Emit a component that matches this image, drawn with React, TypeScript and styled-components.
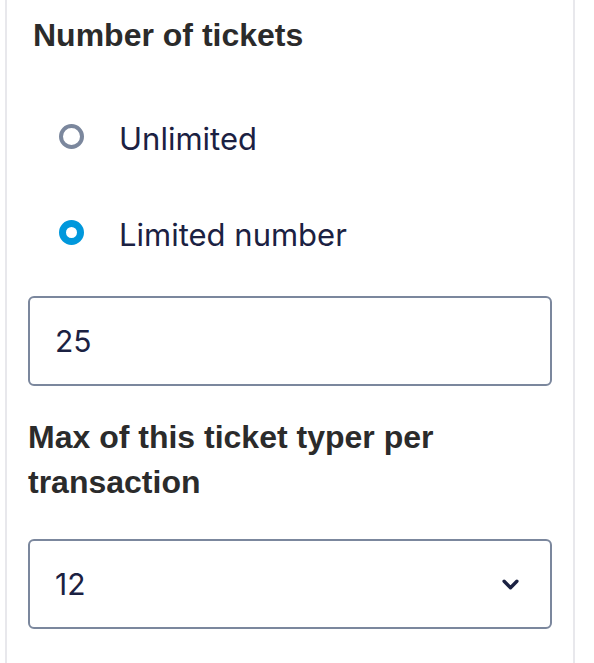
import React, { useState } from 'react'
import styled, { createGlobalStyle } from 'styled-components'

const colors = {
  heading: '#2b2b2b',
  text: '#1b2142',
  border: '#7b879d',
  panelLine: '#e8e8ec',
  blue: '#0098dc',
}

const GlobalStyle = createGlobalStyle`
  html, body {
    margin: 0;
    padding: 0;
    background: #fff;
  }
  * {
    box-sizing: border-box;
  }
`

type Choice = 'unlimited' | 'limited'

function App() {
  const [choice, setChoice] = useState<Choice>('limited')
  const [count, setCount] = useState('25')
  const [max, setMax] = useState('12')

  return (
    <>
      <GlobalStyle />
      <Panel>
        <Heading $indent={5}>Number of tickets</Heading>
        <RadioGroup>
          <RadioRow onClick={() => setChoice('unlimited')}>
            <RadioDot $checked={choice === 'unlimited'} />
            <RadioLabel>Unlimited</RadioLabel>
          </RadioRow>
          <RadioRow onClick={() => setChoice('limited')}>
            <RadioDot $checked={choice === 'limited'} />
            <RadioLabel>Limited number</RadioLabel>
          </RadioRow>
        </RadioGroup>
        <TextInput value={count} onChange={(e) => setCount(e.target.value)} />
        <Heading $indent={0} $top={29}>
          Max of this ticket typer per transaction
        </Heading>
        <SelectWrap>
          <Select value={max} onChange={(e) => setMax(e.target.value)}>
            {Array.from({ length: 20 }, (_, i) => (
              <option key={i + 1} value={String(i + 1)}>
                {i + 1}
              </option>
            ))}
          </Select>
          <Chevron viewBox="0 0 16 10" aria-hidden>
            <path
              d="M2 2l6 6 6-6"
              fill="none"
              stroke={colors.text}
              strokeWidth="3.2"
              strokeLinecap="round"
              strokeLinejoin="round"
            />
          </Chevron>
        </SelectWrap>
      </Panel>
    </>
  )
}

const Panel = styled.div`
  margin-left: 5px;
  width: 570px;
  min-height: 100vh;
  border-left: 2px solid ${colors.panelLine};
  border-right: 2px solid ${colors.panelLine};
  padding: 13px 21px 30px;
  display: flex;
  flex-direction: column;
`

const Heading = styled.h2<{ $indent: number; $top?: number }>`
  margin: ${(p) => p.$top ?? 0}px 0 0;
  padding-left: ${(p) => p.$indent}px;
  font-family: 'Liberation Sans', Arial, sans-serif;
  font-size: 32px;
  font-weight: 700;
  line-height: 1.42857;
  color: ${colors.heading};
  max-width: 430px;
`

const RadioGroup = styled.div`
  display: flex;
  flex-direction: column;
  gap: 48px;
  margin-top: 54px;
  margin-bottom: 39px;
`

const RadioRow = styled.label`
  display: flex;
  align-items: center;
  height: 48px;
  padding-left: 31px;
  gap: 35px;
  cursor: pointer;
`

const RadioDot = styled.span<{ $checked: boolean }>`
  flex: none;
  width: 25px;
  height: 25px;
  border-radius: 50%;
  background: #fff;
  border: ${(p) =>
    p.$checked ? `7.5px solid ${colors.blue}` : `4px solid ${colors.border}`};
`

const RadioLabel = styled.span`
  font-family: Inter, 'Noto Sans', sans-serif;
  font-size: 31px;
  color: ${colors.text};
  line-height: 1;
  padding-top: 4px;
`

const fieldStyles = `
  width: 100%;
  height: 90px;
  border: 2px solid ${colors.border};
  border-radius: 6px;
  background: #fff;
  padding: 0 25px;
  font-family: Inter, 'Noto Sans', sans-serif;
  font-size: 30px;
  color: ${colors.text};
  outline: none;
`

const TextInput = styled.input`
  ${fieldStyles}
`

const SelectWrap = styled.div`
  position: relative;
  margin-top: 33px;
`

const Select = styled.select`
  ${fieldStyles}
  appearance: none;
  -webkit-appearance: none;
  display: block;
`

const Chevron = styled.svg`
  position: absolute;
  right: 33px;
  top: 40px;
  width: 17px;
  height: 11px;
  pointer-events: none;
`

export default App
